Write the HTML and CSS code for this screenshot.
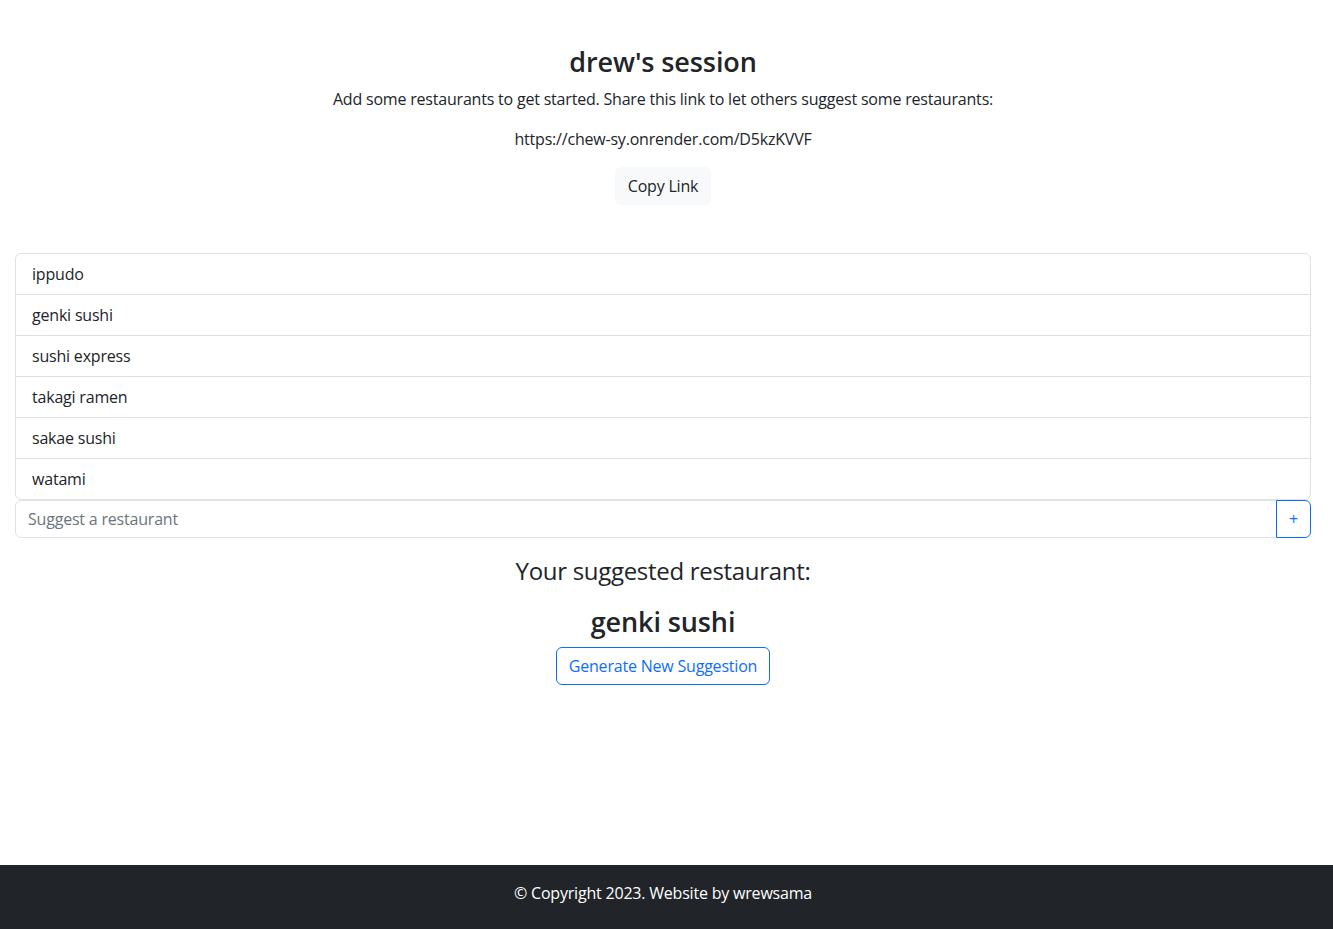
FILE: index.html
```html
<!DOCTYPE html>
<html lang="en">
<head>
<meta charset="utf-8">
<title>drew's session</title>
<link rel="stylesheet" href="styles.css">
</head>
<body>
<main class="page">
  <section class="intro">
    <h1 class="title">drew's session</h1>
    <p class="lead-text">Add some restaurants to get started. Share this link to let others suggest some restaurants:</p>
    <p class="share-link">https://chew-sy.onrender.com/D5kzKVVF</p>
    <button class="btn btn-light" type="button">Copy Link</button>
  </section>

  <ul class="list-group">
    <li class="list-item">ippudo</li>
    <li class="list-item">genki sushi</li>
    <li class="list-item">sushi express</li>
    <li class="list-item">takagi ramen</li>
    <li class="list-item">sakae sushi</li>
    <li class="list-item">watami</li>
  </ul>
  <form class="input-group">
    <input class="form-control" type="text" placeholder="Suggest a restaurant">
    <button class="btn btn-outline-primary btn-add" type="button">+</button>
  </form>

  <section class="suggestion">
    <h4 class="suggestion-label">Your suggested restaurant:</h4>
    <h3 class="suggestion-name">genki sushi</h3>
    <button class="btn btn-outline-primary" type="button">Generate New Suggestion</button>
  </section>
</main>
<footer class="footer">
  <p class="footer-text">© Copyright 2023. Website by wrewsama</p>
</footer>
</body>
</html>
```
FILE: styles.css
```css
* { box-sizing: border-box; }

html, body { margin: 0; padding: 0; }

body {
  min-height: 100vh;
  display: flex;
  flex-direction: column;
  font-family: "Open Sans", "Noto Sans", sans-serif;
  font-size: 16px;
  line-height: 1.5;
  letter-spacing: -0.2px;
  color: #212529;
  background: #fff;
}

.page {
  padding: 0 22px 0 15px;
}

.intro {
  padding-top: 45px;
  text-align: center;
}

.title {
  margin: 0 0 8px;
  font-size: 27px;
  font-weight: 600;
  line-height: 33.6px;
  letter-spacing: -0.1px;
}

.lead-text,
.share-link {
  margin: 0 0 16px;
}

.btn {
  display: inline-block;
  height: 38px;
  padding: 6px 12px;
  font-family: inherit;
  font-size: 16px;
  line-height: 24px;
  letter-spacing: -0.2px;
  border: 1px solid transparent;
  border-radius: 6px;
  background: transparent;
  color: #212529;
  cursor: pointer;
  vertical-align: middle;
}

.btn-light {
  background: #f8f9fa;
  border-color: #f8f9fa;
}

.btn-outline-primary {
  color: #0d6efd;
  border-color: #0d6efd;
}

.list-group {
  list-style: none;
  margin: 48px 0 0;
  padding: 0;
  border: 1px solid #dee2e6;
  border-radius: 6px;
}

.list-item {
  padding: 8px 16px;
  line-height: 24px;
  border-top: 1px solid #dee2e6;
}

.list-item:first-child {
  border-top: 0;
}

.input-group {
  display: flex;
  margin: 0;
}

.form-control {
  flex: 1 1 auto;
  min-width: 0;
  height: 38px;
  padding: 6px 12px;
  font-family: inherit;
  font-size: 16px;
  letter-spacing: -0.2px;
  color: #212529;
  border: 1px solid #dee2e6;
  border-radius: 6px 0 0 6px;
  outline: none;
}

.form-control::placeholder {
  color: #6c757d;
}

.btn-add {
  margin-left: -1px;
  border-radius: 0 6px 6px 0;
  padding: 6px 12px;
}

.suggestion {
  margin-top: 19px;
  text-align: center;
}

.suggestion-label {
  margin: 0 0 20px;
  font-size: 24px;
  font-weight: 400;
  line-height: 28.8px;
  letter-spacing: -0.3px;
}

.suggestion-name {
  margin: 0 0 8px;
  font-size: 27px;
  font-weight: 600;
  line-height: 33.6px;
  letter-spacing: -0.1px;
}

.footer {
  margin-top: auto;
  background: #212529;
  color: #fff;
  padding: 16px 7px 24px 0;
  text-align: center;
}

.footer-text {
  margin: 0;
  line-height: 24px;
}
```
